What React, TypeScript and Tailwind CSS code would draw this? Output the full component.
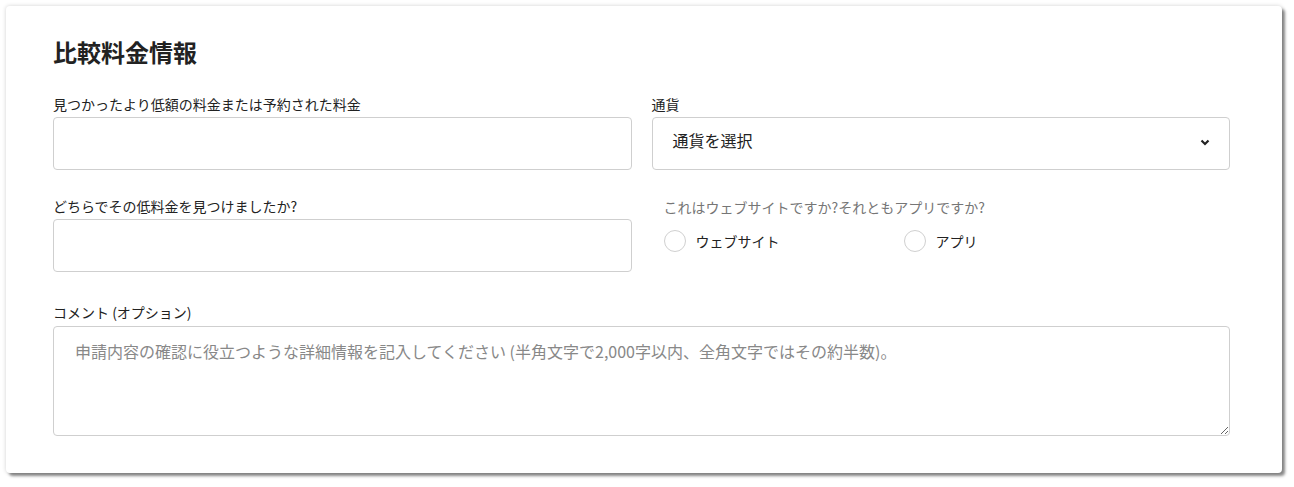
import React from "react";

const font = { fontFamily: '"Noto Sans CJK JP", "Noto Sans", sans-serif' };

function Label({ children, muted }: { children: React.ReactNode; muted?: boolean }) {
    return (
        <label className={`block h-5 text-[14px] leading-5 ${muted ? "text-[#767676]" : "text-[#222]"}`}>
            {children}
        </label>
    );
}

function Radio({ label }: { label: string }) {
    return (
        <label className="flex items-center gap-[10px] text-[14px] leading-[22px] text-[#222]">
            <span className="h-[22px] w-[22px] rounded-full border border-[#d0d0d0] bg-white" />
            {label}
        </label>
    );
}

export default function App() {
    return (
        <div className="min-h-[487px] bg-white" style={font}>
            <div className="ml-[6px] mt-[6px] h-[467px] w-[1276px] rounded-[4px] bg-white pl-[47px] pr-[52px] pt-[30px] shadow-[0_0_4px_rgba(0,0,0,0.18),3px_3px_3px_rgba(0,0,0,0.45)]">
                <h1 className="h-8 text-[24px] font-bold leading-8 text-[#222]">比較料金情報</h1>

                <div className="mt-[26px] grid grid-cols-2 gap-x-5">
                    <div>
                        <Label>見つかったより低額の料金または予約された料金</Label>
                        <input
                            type="text"
                            className="mt-[3px] h-[53px] w-full rounded-[4px] border border-[#cfcfcf] bg-white px-5 text-[16px] outline-none"
                        />
                    </div>
                    <div>
                        <Label>通貨</Label>
                        <div className="mt-[3px] flex h-[53px] w-full items-center justify-between rounded-[4px] border border-[#cfcfcf] bg-white pl-5 pr-[19px]">
                            <span className="-mt-[7px] text-[16px] text-[#222]">通貨を選択</span>
                            <svg width="10" height="7" viewBox="0 0 10 7" className="-mt-[2px]">
                                <path d="M1.5 1.5 L5 5 L8.5 1.5" fill="none" stroke="#222" strokeWidth="2.2" />
                            </svg>
                        </div>
                    </div>

                    <div className="mt-[26px]">
                        <Label>どちらでその低料金を見つけましたか?</Label>
                        <input
                            type="text"
                            className="mt-[3px] h-[53px] w-full rounded-[4px] border border-[#cfcfcf] bg-white px-5 text-[16px] outline-none"
                        />
                    </div>
                    <div className="mt-[27px] pl-3">
                        <Label muted>これはウェブサイトですか?それともアプリですか?</Label>
                        <div className="mt-[13px] flex">
                            <div className="w-[240px]">
                                <Radio label="ウェブサイト" />
                            </div>
                            <Radio label="アプリ" />
                        </div>
                    </div>
                </div>

                <div className="mt-[30px]">
                    <Label>コメント (オプション)</Label>
                    <textarea
                        placeholder="申請内容の確認に役立つような詳細情報を記入してください (半角文字で2,000字以内、全角文字ではその約半数)。"
                        className="mt-1 block h-[110px] w-full rounded-[4px] border border-[#cfcfcf] bg-white px-[21px] py-[12px] text-[16px] leading-6 text-[#222] outline-none placeholder:text-[#888]"
                    />
                </div>
            </div>
        </div>
    );
}
